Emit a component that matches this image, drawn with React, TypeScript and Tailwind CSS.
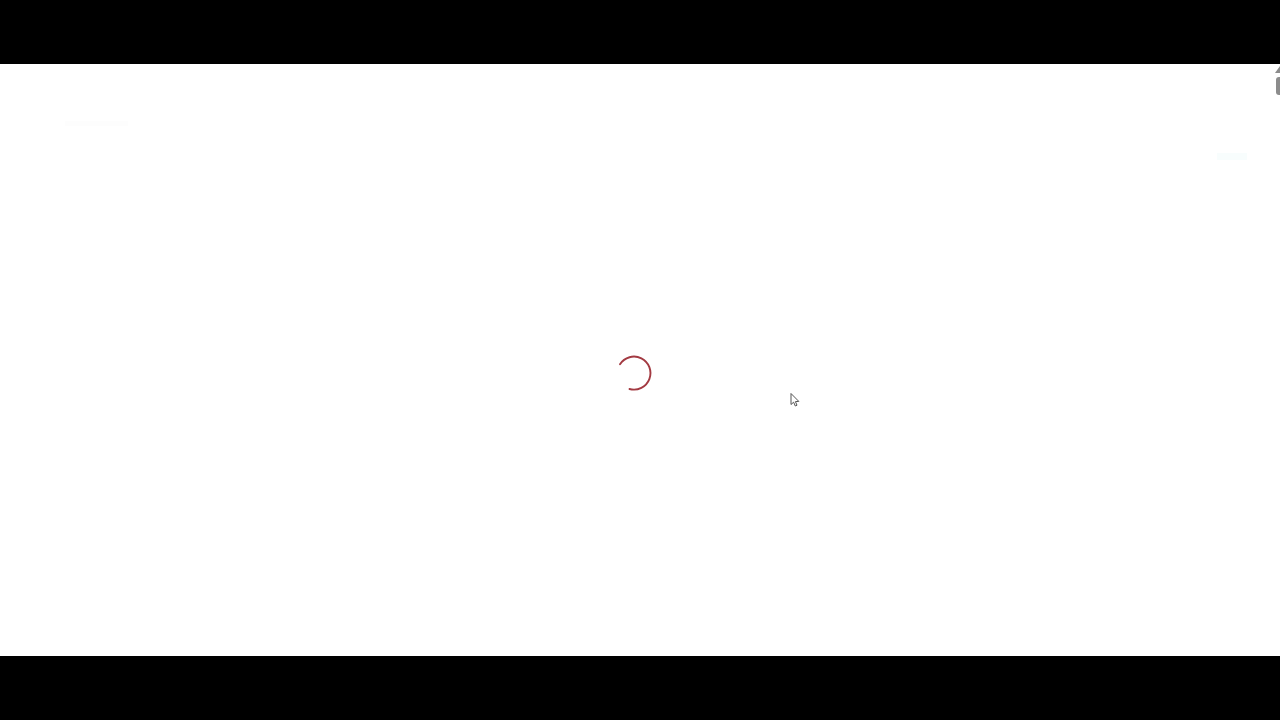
function Spinner() {
  return (
    <svg width="40" height="40" viewBox="0 0 40 40" fill="none">
      <path
        d="M7 11.3 A16.5 16.5 0 1 1 16.5 36"
        stroke="#a33a42"
        strokeWidth="1.9"
        strokeLinecap="round"
      />
    </svg>
  );
}

function Cursor() {
  return (
    <svg width="12" height="16" viewBox="0 0 12 16" fill="none" className="absolute left-[789px] top-[328px]">
      <path
        d="M2 1.5 V12.5 L4.6 10.2 L6.3 14 L8 13.2 L6.4 9.6 L9.8 9.4 Z"
        fill="#ffffff"
        stroke="#555555"
        strokeWidth="1"
        strokeLinejoin="round"
      />
    </svg>
  );
}

export default function App() {
  return (
    <div className="flex h-[720px] w-[1280px] flex-col overflow-hidden bg-black font-['Liberation_Sans',sans-serif]">
      <div className="h-16 shrink-0 bg-black" />

      <main className="relative flex flex-1 flex-col overflow-hidden bg-white">
        {/* barely visible page behind the loader */}
        <div className="ml-[65px] mt-[57px] h-[5px] w-[63px] bg-[#fdfdfd]" />
        <div className="mr-[33px] mt-[27px] h-[7px] w-[30px] self-end bg-[#f8fdfd]" />

        {/* loader */}
        <div className="mt-[193px] flex justify-center pr-[14px]">
          <Spinner />
        </div>

        {/* clipped widget at the right edge */}
        <div className="absolute right-[-5px] top-[2px] h-0 w-0 border-x-[5px] border-b-[7px] border-x-transparent border-b-[#8c8c8c]" />
        <div className="absolute right-[-4px] top-[13px] h-[18px] w-2 rounded-[3px] bg-[#8c8c8c]" />

        <Cursor />
      </main>

      <div className="h-16 shrink-0 bg-black" />
    </div>
  );
}
